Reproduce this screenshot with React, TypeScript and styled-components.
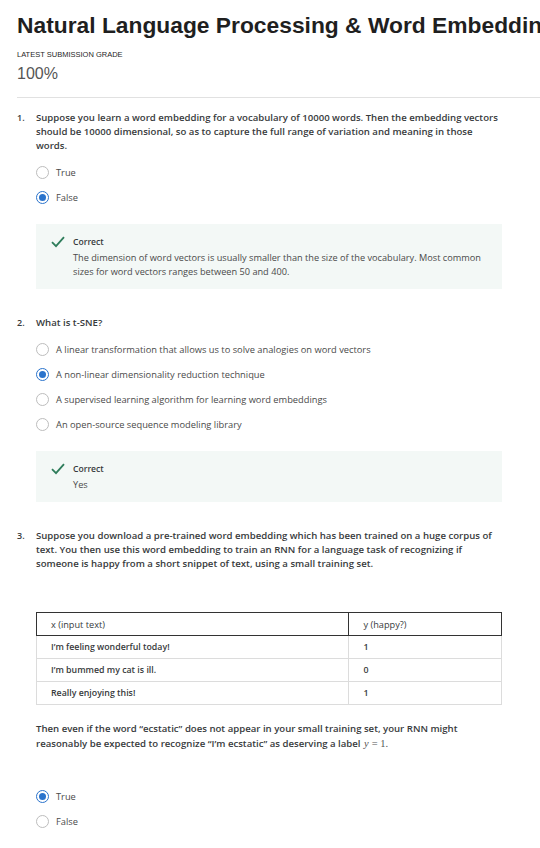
import React from 'react'
import styled, {createGlobalStyle} from 'styled-components'

const GlobalStyle = createGlobalStyle`
  html, body {
    margin: 0;
    padding: 0;
    background: #fff;
  }
  body {
    font-family: 'Open Sans', 'Noto Sans', sans-serif;
    color: #373a3c;
  }
`

const Page = styled.div`
  width: 540px;
  overflow: hidden;
  padding: 11px 0 30px 17px;
  box-sizing: border-box;
`

const Title = styled.h1`
  margin: 0;
  font-family: 'Liberation Sans', Arial, sans-serif;
  font-size: 22.8px;
  line-height: 28px;
  font-weight: 700;
  color: #1f1f1f;
  white-space: nowrap;
`

const GradeLabel = styled.div`
  margin-top: 11px;
  font-family: 'Liberation Sans', Arial, sans-serif;
  font-size: 7.5px;
  line-height: 10px;
  color: #1f1f1f;
  text-transform: uppercase;
`

const GradeValue = styled.div`
  margin-top: 4px;
  font-family: 'Liberation Sans', Arial, sans-serif;
  font-size: 16px;
  line-height: 20px;
  color: #555;
`

const Rule = styled.hr`
  margin: 13px 0 0;
  border: none;
  border-top: 1px solid #e1e1e1;
`

const QuestionList = styled.div`
  display: flex;
  flex-direction: column;
  padding-right: 38px;
`

const Question = styled.section<{first?: boolean}>`
  display: grid;
  grid-template-columns: 19px 1fr;
  margin-top: ${({first}) => (first ? '13px' : '27px')};
`

const Number = styled.div`
  font-size: 9px;
  line-height: 14px;
  font-weight: 600;
  color: #373a3c;
`

const Body = styled.div`
  display: flex;
  flex-direction: column;
`

const Prompt = styled.p`
  margin: 0;
  font-size: 9.6px;
  line-height: 14px;
  font-weight: 600;
  color: #373a3c;
`

const Options = styled.div<{gap?: number}>`
  display: flex;
  flex-direction: column;
  margin-top: ${({gap}) => gap ?? 7}px;
`

const OptionRow = styled.label`
  display: flex;
  align-items: center;
  height: 25px;
  gap: 7px;
  font-size: 9.3px;
  color: #4a4a4a;
`

const RadioCircle = styled.span<{checked?: boolean}>`
  width: 13px;
  height: 13px;
  box-sizing: border-box;
  border-radius: 50%;
  border: 1px solid ${({checked}) => (checked ? '#2a73cc' : '#bdbdbd')};
  display: flex;
  align-items: center;
  justify-content: center;
  flex-shrink: 0;
  ${({checked}) =>
    checked &&
    `
    border-width: 1.5px;
    &::after {
      content: '';
      width: 7px;
      height: 7px;
      border-radius: 50%;
      background: #2a73cc;
    }
  `}
`

const Feedback = styled.div`
  margin-top: 14px;
  background: #f3f8f6;
  padding: 11px 8px 10px 15px;
  display: grid;
  grid-template-columns: 14px 1fr;
  column-gap: 8px;
`

const CheckIcon = styled.svg`
  width: 14px;
  height: 12px;
  margin-top: 1px;
`

const FeedbackTitle = styled.div`
  font-size: 8.6px;
  line-height: 14px;
  font-weight: 600;
  color: #373a3c;
`

const FeedbackText = styled.div`
  margin-top: 2px;
  font-size: 9.2px;
  line-height: 14px;
  color: #4a4a4a;
`

const DataTable = styled.table`
  margin-top: 41px;
  width: 100%;
  border-collapse: collapse;
  color: #373a3c;
`

const HeadCell = styled.th<{wide?: boolean}>`
  height: 22px;
  width: ${({wide}) => (wide ? '67.2%' : 'auto')};
  padding: 0 0 0 14px;
  border: 1px solid #333;
  text-align: left;
  font-size: 9.2px;
  font-weight: 400;
`

const Cell = styled.td`
  height: 22px;
  padding: 0 0 0 14px;
  border: 1px solid #dcdcdc;
  font-size: 8.8px;
  font-weight: 600;
`

const FollowUp = styled.p`
  margin: 16px 0 0;
  font-size: 9.6px;
  line-height: 15px;
  font-weight: 600;
  color: #373a3c;
`

const MathExpr = styled.span`
  margin-left: 1px;
  font-family: 'Liberation Serif', 'DejaVu Serif', serif;
  font-size: 10.5px;
  font-weight: 400;
  color: #555;
`

const MathVar = styled.i`
  display: inline-block;
  margin-right: 3px;
`

function Check() {
  return (
    <CheckIcon viewBox="0 0 14 12">
      <path d="M1 6.2 L5 10.2 L13 1.2" fill="none" stroke="#2e7d5b" strokeWidth="1.8" />
    </CheckIcon>
  )
}

function Radio({label, checked}: {label: string; checked?: boolean}) {
  return (
    <OptionRow>
      <RadioCircle checked={checked} />
      <span>{label}</span>
    </OptionRow>
  )
}

function Correct({children}: {children: React.ReactNode}) {
  return (
    <Feedback>
      <Check />
      <div>
        <FeedbackTitle>Correct</FeedbackTitle>
        <FeedbackText>{children}</FeedbackText>
      </div>
    </Feedback>
  )
}

const rows = [
  ['I\u2019m feeling wonderful today!', '1'],
  ['I\u2019m bummed my cat is ill.', '0'],
  ['Really enjoying this!', '1'],
]

export default function App() {
  return (
    <>
      <GlobalStyle />
      <Page>
        <Title>Natural Language Processing &amp; Word Embeddings</Title>
        <GradeLabel>Latest Submission Grade</GradeLabel>
        <GradeValue>100%</GradeValue>
        <Rule />

        <QuestionList>
          <Question first>
            <Number>1.</Number>
            <Body>
              <Prompt>
                Suppose you learn a word embedding for a vocabulary of 10000 words. Then the embedding
                vectors should be 10000 dimensional, so as to capture the full range of variation and
                meaning in those words.
              </Prompt>
              <Options>
                <Radio label="True" />
                <Radio label="False" checked />
              </Options>
              <Correct>
                The dimension of word vectors is usually smaller than the size of the vocabulary. Most
                common sizes for word vectors ranges between 50 and 400.
              </Correct>
            </Body>
          </Question>

          <Question>
            <Number>2.</Number>
            <Body>
              <Prompt>What is t-SNE?</Prompt>
              <Options>
                <Radio label="A linear transformation that allows us to solve analogies on word vectors" />
                <Radio label="A non-linear dimensionality reduction technique" checked />
                <Radio label="A supervised learning algorithm for learning word embeddings" />
                <Radio label="An open-source sequence modeling library" />
              </Options>
              <Correct>Yes</Correct>
            </Body>
          </Question>

          <Question>
            <Number>3.</Number>
            <Body>
              <Prompt>
                Suppose you download a pre-trained word embedding which has been trained on a huge
                corpus of text. You then use this word embedding to train an RNN for a language task of
                recognizing if someone is happy from a short snippet of text, using a small training set.
              </Prompt>
              <DataTable>
                <thead>
                  <tr>
                    <HeadCell wide>x (input text)</HeadCell>
                    <HeadCell>y (happy?)</HeadCell>
                  </tr>
                </thead>
                <tbody>
                  {rows.map(([x, y]) => (
                    <tr key={x}>
                      <Cell>{x}</Cell>
                      <Cell>{y}</Cell>
                    </tr>
                  ))}
                </tbody>
              </DataTable>
              <FollowUp>
                Then even if the word &ldquo;ecstatic&rdquo; does not appear in your small training set,
                your RNN might reasonably be expected to recognize &ldquo;I&rsquo;m ecstatic&rdquo; as
                deserving a label{' '}
                <MathExpr>
                  <MathVar>y</MathVar>= 1.
                </MathExpr>
              </FollowUp>
              <Options gap={33}>
                <Radio label="True" checked />
                <Radio label="False" />
              </Options>
            </Body>
          </Question>
        </QuestionList>
      </Page>
    </>
  )
}
